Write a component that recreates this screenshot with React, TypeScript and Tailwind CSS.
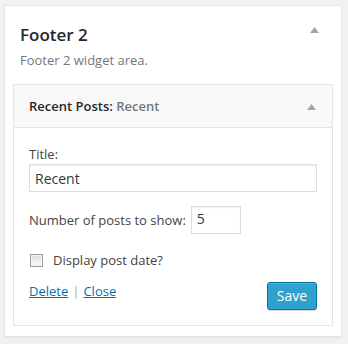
import React from "react";

function Tri({ className }: { className?: string }) {
  return (
    <svg width="9" height="6" viewBox="0 0 9 6" className={className}>
      <polygon points="4.5,0 9,6 0,6" fill="#a0a5aa" />
    </svg>
  );
}

export default function App() {
  return (
    <div
      className="w-[348px] h-[344px] bg-[#f1f1f1] pl-[4px] pt-[5px] overflow-hidden"
      style={{ fontFamily: '"Open Sans", "Noto Sans", sans-serif' }}
    >
      <div className="w-[338px] h-[332px] bg-white border border-[#e5e5e5] shadow-[0_1px_1px_rgba(0,0,0,0.04)]">
        <div className="flex items-start justify-between pl-[15px] pr-[22px] pt-[17px]">
          <h2 className="text-[17px] leading-[24px] font-semibold text-[#23282d] m-0">Footer 2</h2>
          <Tri className="mt-[4px]" />
        </div>
        <p className="text-[13px] leading-[18px] text-[#72777c] pl-[15px] mt-[4px]">Footer 2 widget area.</p>
        <div className="ml-[8px] mt-[15px] w-[320px] border border-[#e5e5e5] bg-white">
          <div className="h-[43px] bg-[#f8f8f8] border-b border-[#e5e5e5] flex items-center justify-between pl-[15px] pr-[16px]">
            <span className="text-[13px] font-semibold text-[#23282d] mt-[2px]">
              Recent Posts: <span className="text-[#72777c]">Recent</span>
            </span>
            <Tri className="mt-[2px]" />
          </div>
          <div className="px-[15px] pt-[17px] pb-[15px] text-[13px] text-[#444]">
            <div className="leading-[18px]">Title:</div>
            <input
              readOnly
              value="Recent"
              className="mt-[1px] w-[288px] h-[28px] border border-[#ddd] shadow-[inset_0_1px_2px_rgba(0,0,0,0.07)] px-[5px] text-[14px] text-[#32373c] outline-none"
            />
            <div className="flex items-center mt-[14px]">
              <span className="leading-[18px]">Number of posts to show:</span>
              <input
                readOnly
                value="5"
                className="ml-[5px] w-[50px] h-[28px] border border-[#ddd] shadow-[inset_0_1px_2px_rgba(0,0,0,0.07)] px-[5px] pb-[3px] text-[14px] text-[#32373c] outline-none"
              />
            </div>
            <div className="flex items-center mt-[17px] h-[18px]">
              <span className="inline-block w-[13px] h-[13px] ml-[1px] border border-[#9a9a9a] bg-[linear-gradient(#dcdcdc,#fafafa)] shadow-[inset_0_0_0_1px_#f4f4f4]" />
              <span className="ml-[10px] text-[13px] leading-[18px]">Display post date?</span>
            </div>
            <div className="flex items-start justify-between mt-[13px]">
              <div className="text-[13px] leading-[18px]">
                <a className="text-[#0073aa] underline">Delete</a>
                <span className="text-[#aaa] mx-[4px]">|</span>
                <a className="text-[#0073aa] underline">Close</a>
              </div>
              <button className="w-[50px] h-[28px] rounded-[3px] bg-[#2ea2cc] border border-[#0074a2] shadow-[inset_0_1px_0_rgba(120,200,230,0.5),0_1px_0_rgba(0,0,0,0.15)] text-white text-[14px] leading-[26px]">
                Save
              </button>
            </div>
          </div>
        </div>
      </div>
    </div>
  );
}
